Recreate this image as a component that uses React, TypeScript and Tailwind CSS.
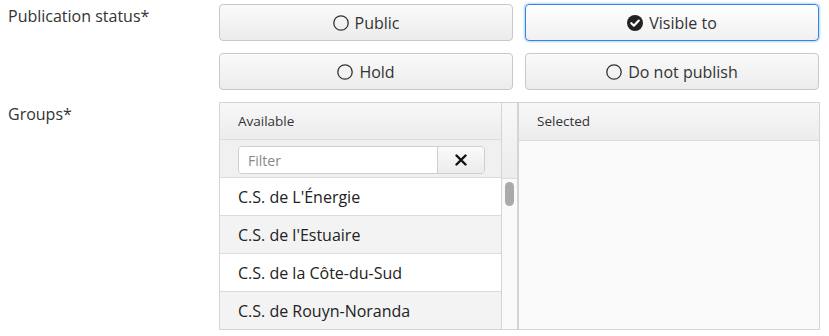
import React from "react";

const font = { fontFamily: '"Open Sans", "Noto Sans", sans-serif' };

function RadioIcon({ checked }: { checked?: boolean }) {
  if (checked) {
    return (
      <svg width="16" height="16" viewBox="0 0 16 16" className="shrink-0">
        <circle cx="8" cy="8" r="8" fill="#222" />
        <path d="M4.3 8.2 L6.9 10.7 L11.8 5.6" stroke="#fff" strokeWidth="2.2" fill="none" strokeLinecap="round" strokeLinejoin="round" />
      </svg>
    );
  }
  return (
    <svg width="16" height="16" viewBox="0 0 16 16" className="shrink-0">
      <circle cx="8" cy="8" r="7.2" fill="none" stroke="#333" strokeWidth="1.3" />
    </svg>
  );
}

function StatusButton({ label, checked }: { label: string; checked?: boolean }) {
  return (
    <button
      className={
        checked
          ? "flex h-[37px] flex-1 items-center justify-center gap-[6px] rounded-[4px] border border-[#2f86e8] bg-gradient-to-b from-[#ffffff] to-[#f0f0f0] text-[16px] text-[#333] shadow-[0_0_3px_rgba(47,134,232,0.7)]"
          : "flex h-[37px] flex-1 items-center justify-center gap-[6px] rounded-[4px] border border-[#c8c8c8] bg-gradient-to-b from-[#fafafa] to-[#ececec] text-[16px] text-[#333]"
      }
      style={font}
    >
      <RadioIcon checked={checked} />
      <span>{label}</span>
    </button>
  );
}

const items = [
  "C.S. de L'Énergie",
  "C.S. de l'Estuaire",
  "C.S. de la Côte-du-Sud",
  "C.S. de Rouyn-Noranda",
];

export default function App() {
  return (
    <div className="h-[336px] w-[829px] bg-white text-[#333]" style={font}>
      <div className="flex pt-[4px]">
        <div className="w-[219px] pl-[8px] pt-[1px] text-[16px] leading-[22px]">Publication status*</div>
        <div className="flex w-[600px] flex-col gap-[12px]">
          <div className="flex gap-[12px]">
            <StatusButton label="Public" />
            <StatusButton label="Visible to" checked />
          </div>
          <div className="flex gap-[12px]">
            <StatusButton label="Hold" />
            <StatusButton label="Do not publish" />
          </div>
        </div>
      </div>
      <div className="mt-[12px] flex">
        <div className="w-[219px] pl-[8px] pt-[1px] text-[16px] leading-[22px]">Groups*</div>
        <div className="flex h-[228px] w-[601px] border border-[#d4d4d4]">
          <div className="flex w-[282px] flex-col border-r border-[#d4d4d4]">
            <div className="flex h-[38px] items-center border-b border-[#dcdcdc] bg-gradient-to-b from-[#f8f8f8] to-[#ececec] pl-[18px] text-[13.5px] text-[#333]">
              Available
            </div>
            <div className="flex h-[37px] items-start bg-[#f0f0f0] pl-[18px] pt-[6px]">
              <div className="flex h-[28px] w-[247px] overflow-hidden rounded-[4px] border border-[#cfcfcf]">
                <input
                  className="h-full w-[199px] border-r border-[#cfcfcf] bg-white px-[9px] text-[14px] text-[#333] outline-none placeholder:text-[#888]"
                  placeholder="Filter"
                  style={font}
                />
                <div className="flex flex-1 items-center justify-center bg-gradient-to-b from-[#fafafa] to-[#ececec]">
                  <svg width="12" height="12" viewBox="0 0 12 12">
                    <path d="M1.5 1.5 L10.5 10.5 M10.5 1.5 L1.5 10.5" stroke="#111" strokeWidth="2.4" strokeLinecap="round" />
                  </svg>
                </div>
              </div>
            </div>
            <div className="flex flex-col">
              {items.map((t, i) => (
                <div
                  key={t}
                  className={
                    (i % 2 === 0 ? "bg-white" : "bg-[#f3f3f3]") +
                    " flex h-[38px] items-center border-t border-[#dcdcdc] pl-[18px] text-[16px] text-[#222]"
                  }
                >
                  {t}
                </div>
              ))}
            </div>
          </div>
          <div className="flex w-[17px] flex-col border-r-2 border-[#d4d4d4]">
            <div className="h-[75px] bg-gradient-to-b from-[#f8f8f8] to-[#ececec]" />
            <div className="flex-1 border-t border-[#dcdcdc] bg-[#fafafa] px-[3px] pt-[3px]">
              <div className="h-[24px] w-[9px] rounded-[5px] bg-[#aaaaaa]" />
            </div>
          </div>
          <div className="flex flex-1 flex-col bg-[#fafafa]">
            <div className="flex h-[38px] items-center border-b border-[#dcdcdc] bg-gradient-to-b from-[#f8f8f8] to-[#ececec] pl-[18px] text-[13.5px] text-[#333]">
              Selected
            </div>
          </div>
        </div>
      </div>
    </div>
  );
}
